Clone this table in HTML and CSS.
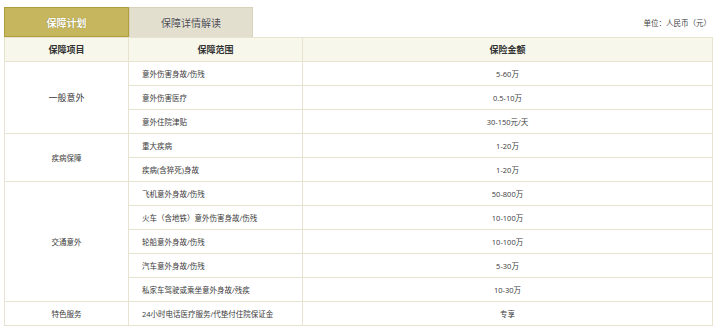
FILE: index.html
```html
<!DOCTYPE html>
<html lang="zh-CN">
<head>
<meta charset="utf-8">
<title>保障计划</title>
<link rel="stylesheet" href="styles.css">
</head>
<body>
<div class="wrap">
  <div class="topbar">
    <div class="tabs">
      <div class="tab tab-active">保障计划</div>
      <div class="tab tab-idle">保障详情解读</div>
    </div>
    <div class="unit">单位：人民币（元）</div>
  </div>
  <table class="plan">
    <colgroup>
      <col class="c1"><col class="c2"><col class="c3">
    </colgroup>
    <thead>
      <tr><th>保障项目</th><th>保障范围</th><th>保险金额</th></tr>
    </thead>
    <tbody>
      <tr><td rowspan="3" class="group group-big">一般意外</td><td class="scope">意外伤害身故/伤残</td><td>5-60万</td></tr>
      <tr><td class="scope">意外伤害医疗</td><td>0.5-10万</td></tr>
      <tr><td class="scope">意外住院津贴</td><td>30-150元/天</td></tr>
      <tr><td rowspan="2" class="group">疾病保障</td><td class="scope">重大疾病</td><td>1-20万</td></tr>
      <tr><td class="scope">疾病(含猝死)身故</td><td>1-20万</td></tr>
      <tr><td rowspan="5" class="group">交通意外</td><td class="scope">飞机意外身故/伤残</td><td>50-800万</td></tr>
      <tr><td class="scope">火车（含地铁）意外伤害身故/伤残</td><td>10-100万</td></tr>
      <tr><td class="scope">轮船意外身故/伤残</td><td>10-100万</td></tr>
      <tr><td class="scope">汽车意外身故/伤残</td><td>5-30万</td></tr>
      <tr><td class="scope">私家车驾驶或乘坐意外身故/残疾</td><td>10-30万</td></tr>
      <tr><td class="group">特色服务</td><td class="scope">24小时电话医疗服务/代垫付住院保证金</td><td>专享</td></tr>
    </tbody>
  </table>
</div>
</body>
</html>
```
FILE: styles.css
```css
html, body {
  margin: 0;
  padding: 0;
  background: #ffffff;
}
body {
  font-family: "Open Sans", "Noto Sans CJK SC", sans-serif;
  color: #3a3a3a;
}
.wrap {
  padding: 7px 7px 0 4px;
}
.topbar {
  display: flex;
  justify-content: space-between;
  align-items: flex-end;
  height: 30px;
}
.tabs {
  display: flex;
  height: 30px;
}
.tab {
  box-sizing: border-box;
  height: 30px;
  display: flex;
  align-items: center;
  justify-content: center;
  font-size: 10px;
  font-family: "Noto Sans CJK SC", sans-serif;
}
.tab-active {
  width: 125px;
  background: #c6b65e;
  border: 1px solid #b09e3c;
  color: #ffffff;
  font-weight: bold;
  text-shadow: 0 0 1px #7d6f25;
}
.tab-idle {
  width: 124px;
  background: #e3dfcf;
  border: 1px solid #d8d2bd;
  border-bottom: none;
  color: #4a4a4a;
  text-shadow: 0 0 1px #ffffff;
}
.unit {
  font-size: 7.5px;
  color: #444;
  align-self: center;
  padding-right: 2px;
}
.plan {
  width: 709px;
  border-collapse: collapse;
  table-layout: fixed;
  font-size: 7.5px;
  border: 1px solid #e6e1cc;
}
.c1 { width: 124px; }
.c2 { width: 174px; }
.c3 { width: auto; }
.plan th, .plan td {
  border: 1px solid #e8e3d0;
  height: 24px;
  padding: 0;
  text-align: center;
  vertical-align: middle;
  box-sizing: border-box;
}
.plan th {
  background: #f8f7ec;
  font-size: 9px;
  font-weight: bold;
  color: #333;
  font-family: "Noto Sans CJK SC", sans-serif;
}
.plan td.scope {
  text-align: left;
  padding-left: 13px;
}
.plan td.group {
  font-size: 7.5px;
}
.plan td.group-big {
  font-size: 9px;
}
```
